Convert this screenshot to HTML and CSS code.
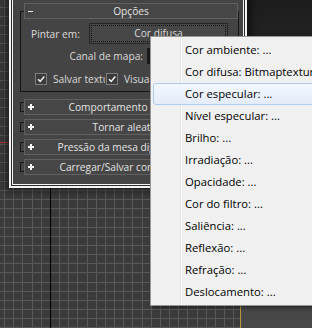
FILE: index.html
```html
<!DOCTYPE html>
<html>
<head>
<meta charset="utf-8">
<link rel="stylesheet" href="styles.css">
</head>
<body>
    <div class="viewport-top">
        <svg width="240" height="328">
            <defs>
                <pattern id="cells" width="55" height="55" x="4" y="34" patternUnits="userSpaceOnUse">
                    <rect width="55" height="55" fill="#3b3b3b"/>
                    <g fill="#595959">
                        <rect x="0" width="1" height="55"/>
                        <rect x="9" width="1" height="55"/>
                        <rect x="18" width="1" height="55"/>
                        <rect x="28" width="1" height="55"/>
                        <rect x="37" width="1" height="55"/>
                        <rect x="46" width="1" height="55"/>
                        <rect y="0" width="55" height="1"/>
                        <rect y="9" width="55" height="1"/>
                        <rect y="18" width="55" height="1"/>
                        <rect y="28" width="55" height="1"/>
                        <rect y="37" width="55" height="1"/>
                        <rect y="46" width="55" height="1"/>
                    </g>
                </pattern>
            </defs>
            <rect width="240" height="328" fill="url(#cells)"/>
            <rect x="50" width="1" height="328" fill="#000"/>
            <rect y="142" width="240" height="1" fill="#b83a30"/>
        </svg>
    </div>
    <div class="viewport-persp"></div>

    <div class="dialog">
        <div class="client">
            <div class="rollout open">
                <div class="rollout-head">
                    <svg class="toggle" width="5" height="5"><rect y="2" width="5" height="1" fill="#e8e8e8"/></svg>
                    <span class="title">Opções</span>
                </div>
                <div class="rollout-body">
                    <div class="row row-paint">
                        <span class="label">Pintar em:</span>
                        <div class="map-button"><span class="focus">Cor difusa</span></div>
                    </div>
                    <div class="row row-channel">
                        <span class="label">Canal de mapa:</span>
                        <span class="spinner"></span>
                    </div>
                    <div class="row row-checks">
                        <span class="check">
                            <svg class="box" width="12" height="12"><rect x="0.5" y="0.5" width="11" height="11" fill="#3a3a3a" stroke="#7d7d7d"/><path d="M3 6.2 L5.2 8.4 L9.3 3.6" fill="none" stroke="#f2f2f2" stroke-width="1.6"/></svg>
                            <span class="check-text first">Salvar textura</span>
                        </span>
                        <span class="check">
                            <svg class="box" width="12" height="12"><rect x="0.5" y="0.5" width="11" height="11" fill="#3a3a3a" stroke="#7d7d7d"/><path d="M3 6.2 L5.2 8.4 L9.3 3.6" fill="none" stroke="#f2f2f2" stroke-width="1.6"/></svg>
                            <span class="check-text">Visualizar</span>
                        </span>
                    </div>
                </div>
            </div>
            <div class="rollout closed">
                <div class="rollout-head">
                    <svg class="toggle" width="6" height="6"><path d="M0 2h6v2H0zM2 0h2v6H2z" fill="#f4f4f4"/></svg>
                    <span class="title">Comportamento do pincel</span>
                </div>
            </div>
            <div class="rollout closed">
                <div class="rollout-head">
                    <svg class="toggle" width="6" height="6"><path d="M0 2h6v2H0zM2 0h2v6H2z" fill="#f4f4f4"/></svg>
                    <span class="title">Tornar aleatório</span>
                </div>
            </div>
            <div class="rollout closed">
                <div class="rollout-head">
                    <svg class="toggle" width="6" height="6"><path d="M0 2h6v2H0zM2 0h2v6H2z" fill="#f4f4f4"/></svg>
                    <span class="title">Pressão da mesa digitalizadora</span>
                </div>
            </div>
            <div class="rollout closed">
                <div class="rollout-head">
                    <svg class="toggle" width="6" height="6"><path d="M0 2h6v2H0zM2 0h2v6H2z" fill="#f4f4f4"/></svg>
                    <span class="title">Carregar/Salvar configurações</span>
                </div>
            </div>
        </div>
    </div>

    <div class="menu">
        <div class="item">Cor ambiente: ...</div>
        <div class="item">Cor difusa: Bitmaptexture</div>
        <div class="item hot">Cor especular: ...</div>
        <div class="item">Nível especular: ...</div>
        <div class="item">Brilho: ...</div>
        <div class="item">Irradiação: ...</div>
        <div class="item">Opacidade: ...</div>
        <div class="item">Cor do filtro: ...</div>
        <div class="item">Saliência: ...</div>
        <div class="item">Reflexão: ...</div>
        <div class="item">Refração: ...</div>
        <div class="item">Deslocamento: ...</div>
    </div>
</body>
</html>
```

FILE: styles.css
```css
html, body {
    margin: 0;
}

body {
    position: relative;
    display: flex;
    width: 312px;
    height: 328px;
    overflow: hidden;
    background: #3b3b3b;
}

.viewport-top {
    width: 240px;
    height: 328px;
}

.viewport-top svg {
    display: block;
}

.viewport-persp {
    flex: 1;
    border-left: 1px solid #b8963a;
    background: linear-gradient(#1d1d1d, #484848);
}

/* floating paint dialog */

.dialog {
    position: absolute;
    z-index: 1;
    left: 9px;
    top: -8px;
    width: 238px;
    height: 196px;
    box-sizing: border-box;
    border: 2px solid #f4f4f4;
    padding: 1px;
    background: #2c2c2c;
    box-shadow: 0 0 8px 3px rgba(0, 0, 0, 0.55);
    font-family: "Open Sans", sans-serif;
    font-size: 10.2px;
    color: #dadada;
}

.client {
    height: 100%;
    box-sizing: border-box;
    border: 1px solid #f4f4f4;
    background: #444;
    padding: 7px 0 0 7px;
    overflow: hidden;
}

.rollout {
    position: relative;
    width: 219px;
    margin-bottom: 4px;
}

.rollout.open {
    margin-bottom: 7px;
}

.rollout.closed::before {
    content: "";
    position: absolute;
    left: 0;
    top: 3px;
    width: 6px;
    height: 8px;
    border: 1px solid #161616;
    border-right: none;
}

.rollout-head {
    position: relative;
    z-index: 1;
    display: grid;
    grid-template-columns: 14px 1fr 14px;
    align-items: center;
    box-sizing: border-box;
    width: 214px;
    height: 16px;
    margin-left: 4px;
    border: 1px solid #616161;
    background: #464646;
    color: #e4e4e4;
    line-height: 14px;
}

.toggle {
    display: block;
    margin-left: 3px;
}

.title {
    text-align: center;
    white-space: nowrap;
}

.rollout-body {
    height: 81px;
    box-sizing: border-box;
    margin-top: -8px;
    border: 1px solid #161616;
    padding: 11px 0 0 10px;
}

.row {
    display: flex;
    align-items: center;
}

.row-paint {
    height: 21px;
}

.row-paint .label {
    width: 58px;
}

.map-button {
    box-sizing: border-box;
    width: 139px;
    height: 21px;
    border: 1px solid #262626;
    background: #474747;
    padding: 1px;
}

.map-button .focus {
    display: block;
    box-sizing: border-box;
    height: 100%;
    border: 1px dotted #101010;
    text-align: center;
    line-height: 15px;
}

.row-channel {
    height: 18px;
    margin-top: 3px;
}

.row-channel .label {
    width: 112px;
    text-align: right;
}

.spinner {
    width: 60px;
    height: 16px;
    margin-left: 4px;
    background: #1b1b1b;
}

.row-checks {
    height: 13px;
    margin-top: 7px;
    padding-left: 4px;
}

.check {
    display: flex;
    align-items: center;
}

.box {
    display: block;
    margin-right: 6px;
}

.check-text {
    white-space: nowrap;
}

.check-text.first {
    width: 52px;
    margin-right: 1px;
    overflow: hidden;
}

/* popup menu */

.menu {
    position: absolute;
    z-index: 2;
    left: 150px;
    top: 36px;
    width: 172px;
    height: 270px;
    box-sizing: border-box;
    border: 1px solid #979797;
    padding: 2px;
    background: linear-gradient(90deg, transparent 29px, #e2e3e3 29px, #e2e3e3 30px, #fff 30px, #fff 31px, transparent 31px), #f0f0f0;
    box-shadow: 2px 2px 3px rgba(0, 0, 0, 0.4);
    font-family: "Open Sans", sans-serif;
    font-size: 11.3px;
    color: #000;
}

.item {
    height: 22px;
    box-sizing: border-box;
    border: 1px solid transparent;
    border-radius: 3px;
    padding-left: 31px;
    line-height: 20px;
    white-space: nowrap;
}

.item.hot {
    border-color: #aeccf0;
    background: linear-gradient(#f3f7fd, #e4ecf9);
}
```
